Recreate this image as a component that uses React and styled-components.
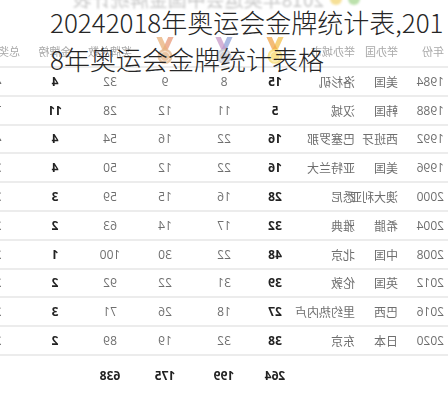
import React from "react";
import styled, { createGlobalStyle } from "styled-components";

const GlobalStyle = createGlobalStyle`
  html, body { margin: 0; padding: 0; background: #ffffff; }
  body { overflow: hidden; }
`;

const Frame = styled.div`
  position: relative;
  width: 448px;
  height: 400px;
  overflow: hidden;
  background: #ffffff;
  font-family: "Noto Sans CJK SC", "Noto Sans", sans-serif;
`;

const Mirror = styled.div`
  width: 448px;
  transform: scaleX(-1);
  filter: blur(0.4px);
`;

const Caption = styled.div`
  height: 36px;
  display: flex;
  align-items: flex-start;
  padding-left: 88px;
  overflow: hidden;
`;

const CaptionInner = styled.div`
  display: flex;
  align-items: center;
  gap: 6px;
  transform: translateY(-11px);
  filter: blur(0.8px);
`;

const Dot = styled.span`
  width: 12px;
  height: 12px;
  border-radius: 50%;
  background: ${(p) => p.$color};
  opacity: 0.7;
`;

const CaptionText = styled.span`
  font-size: 19px;
  line-height: 19px;
  color: #c8c8c8;
  white-space: nowrap;
`;

const Row = styled.div`
  display: grid;
  grid-template-columns: 46px 43px 55px 50px 52px 66px 44px 66px 48px;
  padding-left: 4px;
  width: 474px;
  height: ${(p) => p.$h}px;
  align-items: center;
  border-bottom: ${(p) => (p.$line ? "2px solid #ececec" : "none")};
  box-sizing: border-box;
`;

const Cell = styled.div`
  font-size: 12px;
  white-space: nowrap;
  text-align: ${(p) => p.$align || "center"};
  color: ${(p) => (p.$bold ? "#222222" : "#6e6e6e")};
  font-weight: ${(p) => (p.$bold ? 700 : 400)};
  font-family: ${(p) =>
    p.$num ? '"Open Sans", "Noto Sans", sans-serif' : '"Noto Sans CJK SC", sans-serif'};
`;

const HeadCell = styled.div`
  font-size: 11px;
  white-space: nowrap;
  color: #a9a9a9;
  display: flex;
  justify-content: ${(p) => (p.$align === "left" ? "flex-start" : "center")};
  align-items: center;
`;

const Title = styled.div`
  position: absolute;
  left: 50px;
  right: 0;
  top: 3px;
  font-family: "Noto Sans CJK SC Light", "Noto Sans CJK SC DemiLight", "Noto Sans CJK SC", sans-serif;
  font-weight: 300;
  font-size: 26px;
  line-height: 37px;
  color: #262626;
  word-break: break-all;
`;

const Medal = ({ ribbon, ribbon2, disc }) => (
  <svg width="24" height="30" viewBox="0 0 22 28">
    <path d="M3 1 L8 1 L13 12 L9 14 Z" fill={ribbon} opacity="0.75" />
    <path d="M19 1 L14 1 L9 12 L13 14 Z" fill={ribbon2} opacity="0.75" />
    <circle cx="11" cy="19" r="7" fill={disc} opacity="0.8" />
    <circle cx="11" cy="19" r="4.5" fill="none" stroke="#ffffff" strokeOpacity="0.5" strokeWidth="1" />
  </svg>
);

const data = [
  ["1984", "美国", "洛杉矶", 15, 8, 9, 32, 4, 4],
  ["1988", "韩国", "汉城", 5, 11, 12, 28, 11, 7],
  ["1992", "西班牙", "巴塞罗那", 16, 22, 16, 54, 4, 4],
  ["1996", "美国", "亚特兰大", 16, 22, 12, 50, 4, 3],
  ["2000", "澳大利亚", "悉尼", 28, 16, 15, 59, 3, 3],
  ["2004", "希腊", "雅典", 32, 17, 14, 63, 2, 2],
  ["2008", "中国", "北京", 48, 22, 30, 100, 1, 2],
  ["2012", "英国", "伦敦", 39, 31, 22, 92, 2, 2],
  ["2016", "巴西", "里约热内卢", 27, 18, 26, 71, 3, 2],
  ["2020", "日本", "东京", 38, 32, 19, 89, 2, 2],
];

export default function App() {
  return (
    <>
      <GlobalStyle />
      <Frame>
        <Mirror>
          <Caption>
            <CaptionInner>
              <Dot $color="#9fd48a" />
              <Dot $color="#f2d36b" />
              <CaptionText>2018年奥运会中国金牌统计表</CaptionText>
            </CaptionInner>
          </Caption>
          <Row $h={32} $line>
            <HeadCell $align="left">年份</HeadCell>
            <HeadCell $align="left">举办国</HeadCell>
            <HeadCell $align="left">举办城市</HeadCell>
            <HeadCell>
              <Medal ribbon="#f3c24f" ribbon2="#f0a64a" disc="#f7dc74" />
            </HeadCell>
            <HeadCell>
              <Medal ribbon="#8fa3d8" ribbon2="#c79ac8" disc="#c9ccd6" />
            </HeadCell>
            <HeadCell>
              <Medal ribbon="#e89a7a" ribbon2="#e8b07a" disc="#e4b88c" />
            </HeadCell>
            <HeadCell>奖牌总数</HeadCell>
            <HeadCell>金牌榜</HeadCell>
            <HeadCell>总奖牌榜</HeadCell>
          </Row>
          {data.map((r) => (
            <Row key={r[0]} $h={28.8} $line>
              <Cell $align="left" $num>{r[0]}</Cell>
              <Cell $align="left">{r[1]}</Cell>
              <Cell $align="left">{r[2]}</Cell>
              <Cell $bold $num>{r[3]}</Cell>
              <Cell $num>{r[4]}</Cell>
              <Cell $num>{r[5]}</Cell>
              <Cell $num>{r[6]}</Cell>
              <Cell $bold $num>{r[7]}</Cell>
              <Cell $num>{r[8]}</Cell>
            </Row>
          ))}
          <Row $h={40}>
            <Cell />
            <Cell />
            <Cell />
            <Cell $bold $num>264</Cell>
            <Cell $bold $num>199</Cell>
            <Cell $bold $num>175</Cell>
            <Cell $bold $num>638</Cell>
            <Cell />
            <Cell />
          </Row>
        </Mirror>
        <Title>20242018年奥运会金牌统计表,2018年奥运会金牌统计表格</Title>
      </Frame>
    </>
  );
}
